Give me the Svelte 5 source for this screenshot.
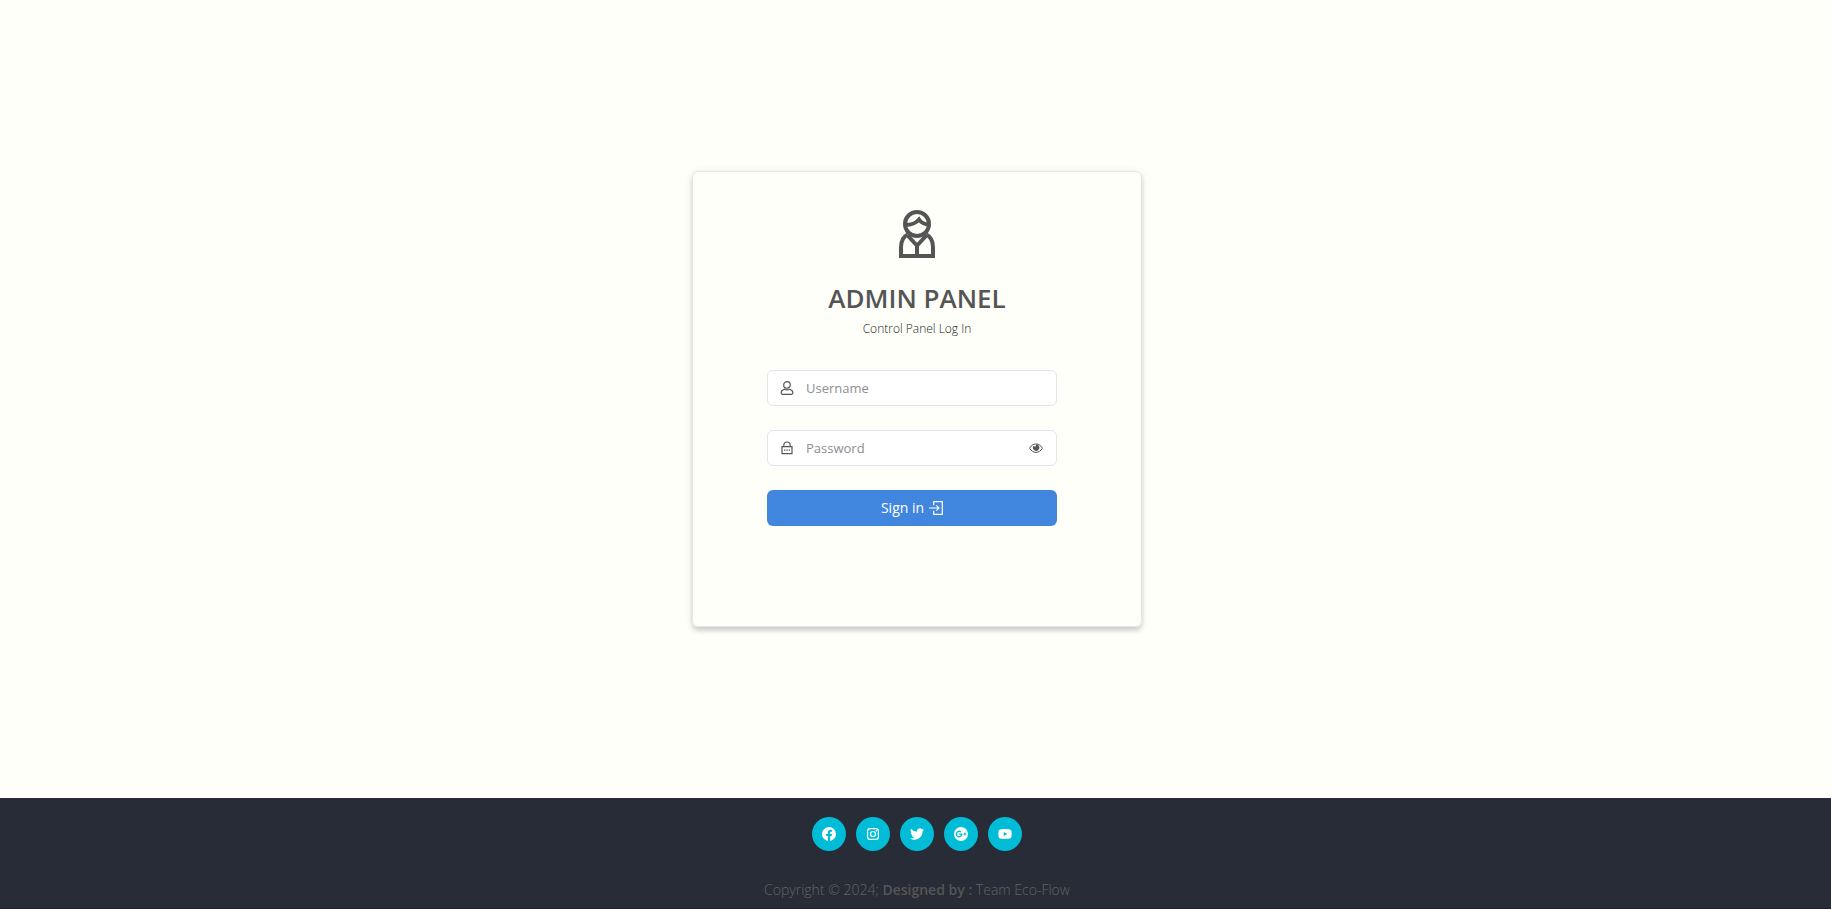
<script>
  let username = $state('');
  let password = $state('');
  let visible = $state(false);

  const links = [
    {
      name: 'Facebook',
      paths: ['M14 7.04A7 7 0 1 0 5.9 14V9.07H4.13V7.04H5.9V5.5c0-1.75 1.05-2.73 2.65-2.73.76 0 1.56.14 1.56.14v1.72h-.88c-.87 0-1.14.54-1.14 1.1v1.31h1.94l-.31 2.03H8.09V14A7 7 0 0 0 14 7.04z']
    },
    {
      name: 'Instagram',
      paths: [
        'M4.2 1h5.6A3.2 3.2 0 0 1 13 4.2v5.6A3.2 3.2 0 0 1 9.8 13H4.2A3.2 3.2 0 0 1 1 9.8V4.2A3.2 3.2 0 0 1 4.2 1zm.1 1.2a2.1 2.1 0 0 0-2.1 2.1v5.4c0 1.160.94 2.1 2.1 2.1h5.4a2.1 2.1 0 0 0 2.1-2.1V4.3a2.1 2.1 0 0 0-2.1-2.1z',
        'M7 3.9a3.1 3.1 0 1 1 0 6.2 3.1 3.1 0 0 1 0-6.2zm0 1.2a1.9 1.9 0 1 0 0 3.8 1.9 1.9 0 0 0 0-3.8z',
        'M10.3 3a.75.75 0 1 1 0 1.5.75.75 0 0 1 0-1.5z'
      ]
    },
    {
      name: 'Twitter',
      paths: ['M12.6 4.15c.01.12.01.25.01.37 0 3.8-2.89 8.17-8.17 8.17A8.1 8.1 0 0 1 .04 11.4a5.8 5.8 0 0 0 4.25-1.19 2.88 2.88 0 0 1-2.68-1.99c.44.07.84.07 1.3-.05A2.87 2.87 0 0 1 .6 5.35v-.04c.38.21.83.35 1.3.36A2.87 2.87 0 0 1 1.01 1.83a8.16 8.16 0 0 0 5.92 3.01A2.88 2.88 0 0 1 11.830 2.220c.65-.12 1.27-.36 1.82-.69a2.86 2.86 0 0 1-1.26 1.58c.58-.06 1.14-.22 1.65-.44-.38.57-.87 1.07-1.44 1.48z']
    },
    {
      name: 'Google Plus',
      paths: ['M7 0a7 7 0 1 0 0 14A7 7 0 0 0 7 0zM5.1 10.4a3.4 3.4 0 1 1 2.3-5.92l-.98.95A2.03 2.03 0 1 0 5.1 9.04c.93 0 1.58-.47 1.79-1.26H5.1V6.5h3.24c.34 2.2-.94 3.9-3.24 3.9zM12.4 7.5h-1v1h-1v-1h-1v-1h1v-1h1v1h1z']
    },
    {
      name: 'YouTube',
      paths: ['M3.6 2.2C5.3 1.950 8.7 1.950 10.4 2.2c2.3.2 3.2 1.1 3.2 3.1v3.4c0 2-.9 2.9-3.2 3.1-1.7.2-5.1.2-6.8 0C1.300 11.6.4 10.7.4 8.700V5.300c0-2 .9-2.900 3.2-3.100zM5.7 4.900v4.200L9.200 7z']
    }
  ];
</script>

<div class="page">
  <main>
    <section class="card">
      <header>
        <svg class="avatar" viewBox="0 0 36 48" aria-hidden="true">
          <circle cx="18" cy="14" r="12" />
          <path d="M6 14.500c6.500.800 10-.5 14-5C22 12.500 25.500 14.300 30 14.500" />
          <path d="M8.600 24.500C4 27 2 31 2 37v9h32v-9c0-6-2-10-6.600-12.500M8.600 25.500 18 35.500l9.400-10M18 35.500V46" />
        </svg>
        <h1>ADMIN PANEL</h1>
        <p>Control Panel Log In</p>
      </header>

      <form onsubmit={(event) => event.preventDefault()}>
        <div class="field">
          <label for="username" aria-label="Username">
            <svg class="icon" viewBox="0 0 14 14" aria-hidden="true">
              <circle cx="7" cy="3.900" r="3.300" />
              <path d="M4.200 8.200C2.400 8.800 1.200 10 1.200 11.600v.5c0 .7.500 1.200 1.200 1.200h9.200c.7 0 1.200-.5 1.200-1.200v-.5c0-1.600-1.200-2.800-3-3.400C8 9 6 9 4.200 8.200z" />
            </svg>
          </label>
          <input id="username" type="text" placeholder="Username" autocomplete="off" bind:value={username} />
        </div>

        <div class="field">
          <label for="password" aria-label="Password">
            <svg class="icon lock" viewBox="0 0 14 14" aria-hidden="true">
              <path d="M2 5.700h10v7H2zM3.800 5.700V4.200a3.200 3.200 0 0 1 6.400 0v1.500" />
              <path d="M4 9.200h1.300M6.300 9.200h1.400M8.700 9.200H10" />
            </svg>
          </label>
          <input id="password" type={visible ? 'text' : 'password'} placeholder="Password" autocomplete="off" value={password} oninput={(event) => (password = event.currentTarget.value)} />
          <button class="reveal" type="button" aria-label="Show password" onclick={() => (visible = !visible)}>
            <svg class="icon" viewBox="0 0 14 14" aria-hidden="true">
              <path d="M.500 7.200C2.200 4.400 4.400 3 7 3s4.800 1.400 6.500 4.200C11.800 9.900 9.600 11.400 7 11.400S2.200 9.900.500 7.200z" />
              <path class="solid" d="M4.300 5.100a3.200 3.200 0 1 0 5.200-.6A3.200 3.200 0 0 0 7.200 3.400L6.500 5.700z" />
            </svg>
          </button>
        </div>

        <button class="submit" type="submit">
          <span>Sign in</span>
          <svg class="icon" viewBox="0 0 14 14" aria-hidden="true">
            <path d="M4.700 4.300V.7h8.600v12.600H4.700V9.700" />
            <path d="M0 7h9.800M7.300 4.300 10 7 7.300 9.700" />
          </svg>
        </button>
      </form>
    </section>
  </main>

  <footer>
    <nav aria-label="Social">
      {#each links as link}
        <a href="#{link.name.toLowerCase().replace(' ', '-')}" aria-label={link.name}>
          <svg viewBox="0 0 14 14" aria-hidden="true">
            {#each link.paths as d}
              <path fill-rule="evenodd" {d} />
            {/each}
          </svg>
        </a>
      {/each}
    </nav>
    <p>Copyright © 2024; <strong>Designed by :</strong> Team Eco-Flow</p>
  </footer>
</div>

<style>
  :global(body) {
    margin: 0;
    background: #fefff9;
  }

  .page {
    display: flex;
    flex-direction: column;
    min-height: 100vh;
    font-family: 'Segoe UI', 'Open Sans', 'Noto Sans', sans-serif;
    font-size: 14px;
    line-height: 20px;
    color: #555;
  }

  h1,
  p {
    margin: 0;
  }

  main {
    flex: 1;
    display: flex;
    align-items: center;
    justify-content: center;
    padding-left: 3px;
  }

  .card {
    box-sizing: border-box;
    width: 450px;
    max-width: 100%;
    padding: 38px 84px 100px 74px;
    border: 1px solid #e4e4ec;
    border-radius: 6px;
    box-shadow:
      0 4px 4px rgba(0, 0, 0, 0.14),
      0 1px 10px rgba(0, 0, 0, 0.08);
  }

  header {
    display: flex;
    flex-direction: column;
    align-items: center;
    margin-right: -10px;
    margin-bottom: 30px;
  }

  .avatar {
    width: 36px;
    height: 48px;
    margin-bottom: 20px;
    fill: none;
    stroke: #555;
    stroke-width: 4;
  }

  h1 {
    font-size: 26px;
    font-weight: 600;
    line-height: 40px;
    white-space: nowrap;
  }

  header p {
    font-size: 12px;
    font-weight: 300;
    line-height: 22px;
    color: #222;
  }

  form {
    display: flex;
    flex-direction: column;
    gap: 24px;
  }

  .field {
    box-sizing: border-box;
    display: flex;
    align-items: center;
    height: 36px;
    padding: 0 13px 0 12px;
    border: 1px solid #e4e4ec;
    border-radius: 6px;
    background: #fff;
  }

  .field label {
    display: flex;
  }

  .icon {
    width: 14px;
    height: 14px;
    fill: none;
    stroke: currentColor;
    stroke-width: 1.2;
  }

  .reveal .icon {
    stroke-width: 1;
  }

  .icon .solid {
    fill: currentColor;
    stroke: none;
  }

  input {
    flex: 1;
    min-width: 0;
    margin: 0 0 0 12px;
    padding: 0;
    border: 0;
    outline: 0;
    background: none;
    font: inherit;
    font-size: 13px;
    color: #555;
  }

  input::placeholder {
    color: #8e8e93;
    opacity: 1;
  }

  button {
    font: inherit;
    cursor: pointer;
  }

  .reveal {
    display: flex;
    padding: 0;
    border: 0;
    background: none;
    color: #555;
  }

  .submit {
    display: flex;
    align-items: center;
    justify-content: center;
    gap: 5px;
    height: 36px;
    padding: 0;
    border: 0;
    border-radius: 6px;
    background: #4086df;
    color: #fff;
  }

  footer {
    display: flex;
    flex-direction: column;
    align-items: center;
    gap: 28px;
    padding: 19px 0 7px 3px;
    border-bottom: 1px solid #201c28;
    background: #282c37;
  }

  nav {
    display: flex;
    gap: 10px;
  }

  nav a {
    display: flex;
    align-items: center;
    justify-content: center;
    width: 34px;
    height: 34px;
    border-radius: 50%;
    background: #00bcd6;
  }

  nav svg {
    width: 14px;
    height: 14px;
    fill: #fff;
  }

  footer p {
    font-weight: 300;
    line-height: 22px;
    color: #646464;
  }

  strong {
    font-weight: 600;
    color: #555;
  }
</style>
